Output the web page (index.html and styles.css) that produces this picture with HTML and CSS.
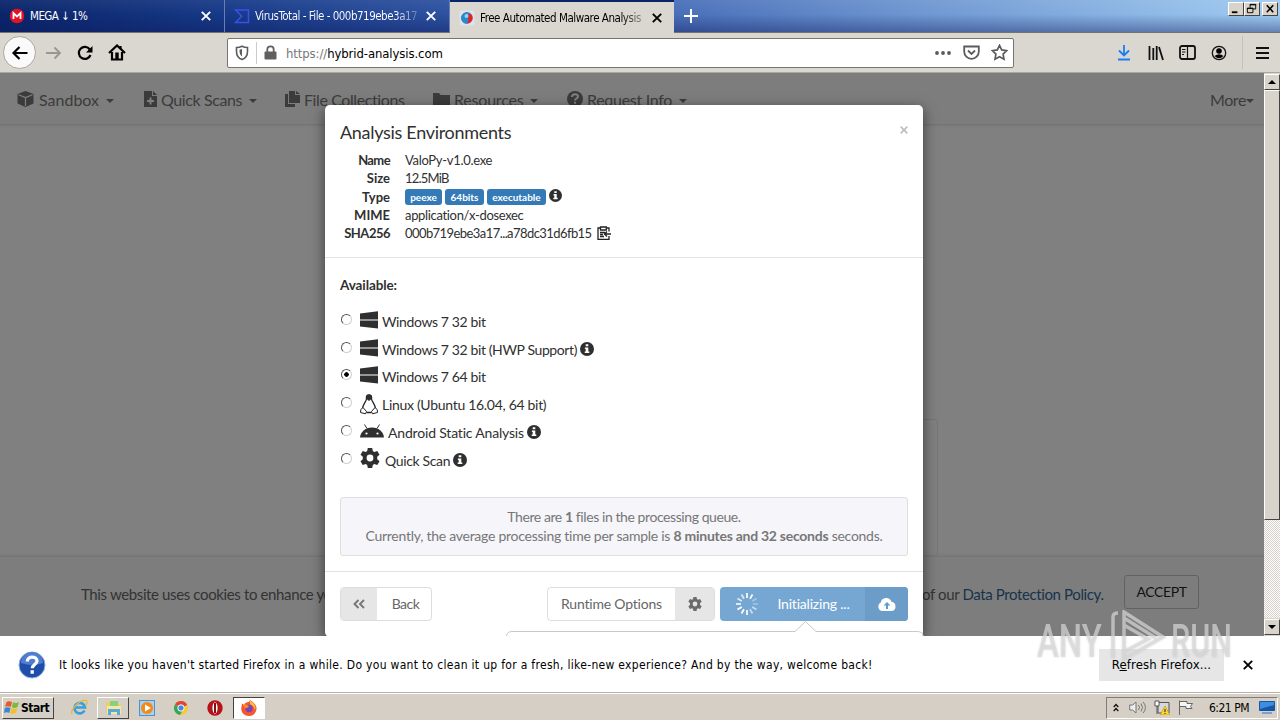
FILE: index.html
```html
<!DOCTYPE html>
<html lang="en">
<head>
<meta charset="utf-8">
<title>Free Automated Malware Analysis</title>
<link rel="stylesheet" href="styles.css">
</head>
<body>
<svg class="defs" width="0" height="0">
  <symbol id="win" viewBox="0 0 18 18"><path d="M0 2.6 18 .2V8.400H0zM0 9.400H18V17.600L0 15.400z"/></symbol>
  <symbol id="info" viewBox="0 0 14 14"><circle cx="7" cy="7" r="7"/><path fill="#fff" d="M5.7 2.3h2.6v2H5.7zM4.9 5.5h3.4v4h1v1.6H4.7V9.500h1V7h-.8z"/></symbol>
  <symbol id="gear" viewBox="0 0 20 20"><path fill-rule="evenodd" d="M7.800 0h4.400l.6 3 1.500.9 3-1 2.200 3.800-2.300 2v2.600l2.300 2-2.200 3.800-3-1-1.500.9-.6 3H7.800l-.6-3-1.500-.9-3 1L.5 13.300l2.300-2V8.700L.5 6.700l2.200-3.800 3 1L7.200 3zM10 6.600a3.400 3.400 0 1 0 0 6.800 3.400 3.400 0 0 0 0-6.800z"/></symbol>
  <symbol id="x" viewBox="0 0 10 10"><path d="M.8.8 9.200 9.200M9.200.8.8 9.200" stroke="currentColor" stroke-width="1.900" fill="none"/></symbol>
</svg>
<div class="screen">
  <header class="tabs">
    <div class="tab">
      <svg class="fav" viewBox="0 0 16 16"><circle cx="8" cy="8" r="7.300" fill="#e01424"/><path d="M4.500 11V5.200L8 8.500l3.500-3.300V11" fill="none" stroke="#fff" stroke-width="1.800"/></svg>
      <span class="tab-title t-mega">MEGA ↓ 1%</span><svg class="tab-x"><use href="#x"/></svg>
    </div>
    <div class="tab">
      <svg class="fav" viewBox="0 0 16 16"><path d="M1.500 2h13v12.500h-13l6.200-6.200z" fill="none" stroke="#3c50e8" stroke-width="1.500"/></svg>
      <span class="tab-title fade-light t-vt">VirusTotal - File - 000b719ebe3a17</span><svg class="tab-x"><use href="#x"/></svg>
    </div>
    <div class="tab active">
      <svg class="fav" viewBox="0 0 16 16"><rect x=".5" y=".5" width="15" height="15" rx="2" fill="#d8e4ee"/><circle cx="8" cy="8" r="5.800" fill="#dc2626"/><path d="M8 13.800A5.800 5.800 0 1 1 12 3.800C9 4 8 6 9 8s0 4-1 5.800z" fill="#238bd0"/><circle cx="7.500" cy="6" r="2" fill="#9bd2f2"/></svg>
      <span class="tab-title fade-dark t-ha">Free Automated Malware Analysis</span><svg class="tab-x"><use href="#x"/></svg>
    </div>
    <svg class="newtab" viewBox="0 0 14 14"><path d="M7 0v14M0 7h14" stroke="#fff" stroke-width="2"/></svg>
    <div class="winbtns">
      <svg viewBox="0 0 15 13"><path d="M3 9h6v2H3z"/></svg>
      <svg viewBox="0 0 15 13"><path d="M5.500 5V1.500h6v5H9M5 2h7M2.500 5.500h6v5h-6zM2 6h7" fill="none" stroke="#000"/></svg>
      <svg class="last" viewBox="0 0 15 13"><path d="M4 2.500l7 7.500M11 2.500 4 10" stroke="#000" stroke-width="1.700"/></svg>
    </div>
  </header>
  <div class="toolbar">
    <div class="back"><svg width="18" height="18" viewBox="0 0 18 18"><path d="M16.500 9H2.500M8.500 3 2.500 9l6 6" class="ln"/></svg></div>
    <svg class="fwd" width="17" height="16" viewBox="0 0 17 16"><path d="M1 8h14M9.500 2.500 15 8l-5.500 5.500" fill="none" stroke="#999791" stroke-width="1.800"/></svg>
    <svg class="reload" width="16" height="16" viewBox="0 0 16 16"><path d="M12.800 4.500A6 6 0 1 0 13.500 10" class="ln"/><path d="M15.500 1v6.500H9z"/></svg>
    <svg class="home" width="18" height="17" viewBox="0 0 18 17"><path d="M1 9 9 1.500 17 9" class="ln"/><path d="M4 8v7.500h10V8M12.500 5V2" class="ln"/><path d="M7.300 8.500h3.400v7H7.300z"/></svg>
    <div class="urlbar">
      <svg class="shield" width="14" height="16" viewBox="0 0 14 16"><path d="M1.500 2.500Q4.500 2.500 7 1.200q2.500 1.300 5.500 1.300v4c0 4-2 6.800-5.500 8-3.500-1.200-5.500-4-5.500-8z" fill="none" stroke="#5b5b5b" stroke-width="1.600"/><path d="M7 4v7.500C5 10.200 4.500 8.300 4.500 4.800z" fill="#5b5b5b"/></svg>
      <i class="usep"></i>
      <svg width="13" height="15" viewBox="0 0 13 15"><path d="M3.300 7V4.500a3.200 3.200 0 0 1 6.400 0V7" fill="none" stroke="#606060" stroke-width="1.800"/><rect x=".5" y="6.500" width="12" height="8" rx="1" fill="#606060"/></svg>
      <span class="url"><span class="proto">https://</span>hybrid-analysis.com</span>
      <svg width="16" height="16" viewBox="0 0 16 16" fill="#5b5b5b"><circle cx="2" cy="8" r="1.900"/><circle cx="8" cy="8" r="1.900"/><circle cx="14" cy="8" r="1.900"/></svg>
      <svg class="pocket" width="17" height="15" viewBox="0 0 17 15" fill="none" stroke="#5b5b5b" stroke-width="1.800"><path d="M1.200 1.500h14.600v5a7.300 7.300 0 0 1-14.600 0z"/><path d="M5 5.500 8.500 9 12 5.500"/></svg>
      <svg width="17" height="17" viewBox="0 0 17 17"><path d="m8.500 1.300 2.200 4.600 5 .7-3.600 3.500.9 5.100-4.500-2.400L4 15.200l.9-5.100L1.300 6.600l5-.7z" fill="none" stroke="#5b5b5b" stroke-width="1.700"/></svg>
    </div>
    <div class="tools">
      <svg width="16" height="17" viewBox="0 0 16 17" fill="none" stroke="#1a7df5" stroke-width="1.800"><path d="M8 1v10M3 6.500l5 5 5-5M2 15.500h12"/></svg>
      <svg width="16" height="16" viewBox="0 0 16 16" stroke="#111" stroke-width="1.800"><path d="M1.500 1v14M5.300 3v12M8.700 1v14M11 2l4 13"/></svg>
      <svg width="17" height="15" viewBox="0 0 17 15" fill="none" stroke="#111" stroke-width="1.800"><rect x="1" y="1" width="15" height="13" rx="2"/><path d="M8.500 1v13M3 4.500h3.500M3 7h3.500M3 9.500h2" stroke-width="1.200"/></svg>
      <svg width="16" height="16" viewBox="0 0 16 16"><circle cx="8" cy="8" r="6.700" fill="none" stroke="#111" stroke-width="1.300"/><circle cx="8" cy="6" r="2.800"/><path d="M3.500 11Q8 7.500 12.500 11 8 15.500 3.500 11z"/></svg>
      <i class="tsep"></i>
      <svg width="13" height="14" viewBox="0 0 13 14" stroke="#111" stroke-width="2"><path d="M0 2h13M0 7h13M0 12h13"/></svg>
    </div>
  </div>
  <div class="viewport">
    <main class="page">
      <nav class="nav">
        <span class="n1"><svg width="17" height="16" viewBox="0 0 17 16"><path d="m8.500 0 8 3v9.500l-8 3.500-8-3.500V3z"/><path d="m1.500 3.800 7 2.700 7-2.700M8.500 6.500V15" fill="none" stroke="#808080" stroke-width="1.200"/></svg><b class="nl1">Sandbox</b><i></i></span>
        <span class="n2"><svg width="13" height="16" viewBox="0 0 13 16"><path d="M0 0h8v5h5v11H0zM9 0l4 4H9z"/><path d="M6.500 6.500v7M3 10h7" stroke="#808080" stroke-width="2"/></svg><b class="nl2">Quick Scans</b><i></i></span>
        <span class="n3"><svg width="15" height="16" viewBox="0 0 15 16"><path d="M0 3h3v10h7v3H0zM4 0h6v4h5v8H4zM11 0l4 3h-4z"/></svg><b class="nl3">File Collections</b></span>
        <span class="n4"><svg width="17" height="14" viewBox="0 0 17 14"><path d="M0 1h6l1.500 2H17v11H0z"/></svg><b class="nl4">Resources</b><i></i></span>
        <span class="n5"><svg width="16" height="16" viewBox="0 0 16 16"><circle cx="8" cy="8" r="8"/><path d="M5 6c0-4 6-3.500 6-.5 0 2-3 1.700-3 4M8 10.800v2" fill="none" stroke="#808080" stroke-width="2"/></svg><b class="nl5">Request Info</b><i></i></span>
        <span class="n6"><b class="nl6">More</b><i></i></span>
      </nav>
      <div class="panel"></div>
      <div class="cookies"><span class="ck">This website uses cookies to enhance your</span><span class="policy"><span>of our</span> <a>Data Protection Policy.</a></span><span class="accept">ACCEPT</span></div>
      <section class="modal">
        <div class="mhead">
          <div class="mtitle"><h4>Analysis Environments</h4><svg width="8" height="8" class="close"><use href="#x"/></svg></div>
          <dl>
            <dt class="d1">Name</dt><dd><span class="v1">ValoPy-v1.0.exe</span></dd>
            <dt class="d2">Size</dt><dd><span class="v2">12.5MiB</span></dd>
            <dt class="d3">Type</dt><dd><em class="e1">peexe</em><em class="e2">64bits</em><em class="e3">executable</em><svg class="inf3" width="13" height="13"><use href="#info"/></svg></dd>
            <dt class="d4">MIME</dt><dd><span class="v4">application/x-dosexec</span></dd>
            <dt class="d5">SHA256</dt><dd><span class="v5">000b719ebe3a17...a78dc31d6fb15</span><svg class="clip" width="14" height="14" viewBox="0 0 14 14"><path d="M3 2H1v11.300h11V10M10 2h2v3.500M3.500 1h5.800v3H3.500zM3 6.500h5M3 8.500h3M3 10.500h4M14 8H7.500M10 5.500 7.500 8l2.500 2.500" fill="none" stroke="#222" stroke-width="1.300"/></svg></dd>
          </dl>
        </div>
        <div class="mbody">
          <strong>Available:</strong>
          <ul>
            <li><i class="radio"></i><svg class="w"><use href="#win"/></svg><span class="o1">Windows 7 32 bit</span></li>
            <li><i class="radio"></i><svg class="w"><use href="#win"/></svg><span class="o2">Windows 7 32 bit (HWP Support)</span><svg class="inf"><use href="#info"/></svg></li>
            <li><i class="radio on"></i><svg class="w"><use href="#win"/></svg><span class="o3">Windows 7 64 bit</span></li>
            <li><i class="radio"></i><svg class="tux" viewBox="0 0 18 21"><path d="M6.500 5C6 2 7 .8 9 .8S12 2 11.500 5c.5 3 4 5.500 4 10M6.500 5c-.5 3-4 5.500-4 10M6.500 18.500h5" fill="none" stroke="#222" stroke-width="1.300"/><path d="M6.500 1.500 9 .5l2.500 1V5L9 7 6.500 5z"/><path d="m3 13.500 3.500 4-1 2.300-5-1.300.3-3zM15 13.500l-3.500 4 1 2.300 5-1.300-.3-3z" fill="#fff" stroke="#222"/></svg><span class="o4">Linux (Ubuntu 16.04, 64 bit)</span></li>
            <li><i class="radio"></i><svg class="droid" viewBox="0 0 24 14"><path d="M0 13.500C.5 8 5 3.500 12 3.500S23.500 8 24 13.500z"/><path d="m4.500.5 2.500 4M19.500.5l-2.500 4" stroke="#2f2f2f"/><circle cx="6.500" cy="9.500" r="1.100" fill="#fff"/><circle cx="17.500" cy="9.500" r="1.100" fill="#fff"/></svg><span class="o5">Android Static Analysis</span><svg class="inf"><use href="#info"/></svg></li>
            <li><i class="radio"></i><svg class="cog"><use href="#gear"/></svg><span class="o6">Quick Scan</span><svg class="inf"><use href="#info"/></svg></li>
          </ul>
          <div class="queue"><p class="q1">There are <b>1</b> files in the processing queue.</p><p class="q2">Currently, the average processing time per sample is <b>8 minutes and 32 seconds</b> seconds.</p></div>
        </div>
        <div class="mfoot">
          <div class="btn backb"><i><svg width="12" height="10" viewBox="0 0 12 10"><path d="M5.500 1 1.500 5l4 4M11 1 7 5l4 4" fill="none" stroke="#777" stroke-width="1.900"/></svg></i><span>Back</span></div>
          <div class="btn runtime"><span>Runtime Options</span><i><svg width="14" height="14"><use href="#gear"/></svg></i></div>
          <div class="btn init"><svg class="spin" width="22" height="22" viewBox="-11 -11 22 22" stroke="#fff" stroke-width="1.700"><path d="M0-6v-5M3-5.200 5.500-9.500"/><path d="M5.200-3 9.500-5.500M6 0h5" opacity=".35"/><path d="m5.200 3 4.300 2.500M3 5.200l2.500 4.300" opacity=".6"/><path d="M0 6v5M-3 5.200l-2.500 4.300M-5.200 3l-4.300 2.500M-6 0h-5"/><path d="m-5.200-3-4.300-2.500M-3-5.200l-2.500-4.300" opacity=".75"/></svg><span>Initializing ...</span><i><svg width="18" height="13" viewBox="0 0 18 13" fill="#fff"><path d="M4.500 13a4.500 4.500 0 0 1-1.700-8.500 5.500 5.500 0 0 1 10.600-.7A4.700 4.700 0 0 1 14 13z"/><path d="M9 4 5.500 7.500H8V11h2V7.500h2.500z" fill="#609bce"/></svg></i></div>
        </div>
        <svg class="pop" width="418" height="15" viewBox="0 0 418 15"><path d="M.5 15Q1 10.500 6 10.500H289L299.500.5 310 10.500H411Q417 10.500 417 15" fill="#fff" stroke="#c9c9cc"/></svg>
      </section>
    </main>
    <aside class="scroll"><div class="sbtn"><svg width="8" height="4" viewBox="0 0 8 4"><path d="M4 0 8 4H0z"/></svg></div><div class="thumb"></div><div class="track"></div><div class="sbtn"><svg width="8" height="4" viewBox="0 0 8 4"><path d="M0 0h8L4 4z"/></svg></div></aside>
  </div>
  <div class="notice">
    <svg width="28" height="28" viewBox="0 0 28 28"><circle cx="14" cy="14" r="13" fill="#1f4daa" stroke="#91acd9"/><path d="M3 12a11 11 0 0 1 22 0q-10 4-22 0z" fill="#4e7ed0"/><path d="M9.300 10.500c0-6 9.700-5.500 9.700-.5 0 3.500-4.700 3.500-4.700 7.200M14.200 19.300v3.500" fill="none" stroke="#fff" stroke-width="3.300"/></svg>
    <span class="msg">It looks like you haven't started Firefox in a while. Do you want to clean it up for a fresh, like-new experience? And by the way, welcome back!</span>
    <div class="refresh"><span>R<u>e</u>fresh Firefox...</span></div>
    <svg class="nx" width="10" height="10"><use href="#x"/></svg>
  </div>
  <footer class="taskbar">
    <div class="start"><svg width="16" height="15" viewBox="0 0 16 15"><path d="M2.500 2Q5 .5 8 2L6.800 7Q4 5.500 1 7z" fill="#e85a29"/><path d="M9 2.300q3 1.500 6-.3L13.500 7q-3 1.700-5.700.3z" fill="#7bba3c"/><path d="M.8 8q3-1.500 5.700 0L5.300 13Q3 11.500 0 13z" fill="#3c84d4"/><path d="M7.500 8.300q3 1.500 5.700 0L12 13q-3 1.500-5.700.3z" fill="#f6bf26"/></svg><span>Start</span></div>
    <svg class="ie" width="17" height="17" viewBox="0 0 17 17"><path d="M13.500 11.500A5.300 5.300 0 1 1 14 8.500H4" fill="none" stroke="#39a0dc" stroke-width="2.700"/><path d="M1 15C-1 11 9 0 15 1.500c2 .7.500 4-.5 5" fill="none" stroke="#e4b83f" stroke-width="1.300"/></svg>
    <div class="task up"><svg width="17" height="16" viewBox="0 0 17 16"><path d="M1 2h6l1 2h8v10H1z" fill="#e8cf70"/><path d="M5 1h8v6H5z" fill="#8ccf77"/><path d="M2 6h14v8H2z" fill="#f6e6a0"/><path d="M3 9h12v6h-3v-3H6v3H3z" fill="#59aadc"/></svg></div>
    <svg class="wmp" width="16" height="16" viewBox="0 0 16 16"><rect x=".5" y=".5" width="15" height="15" fill="#a8d0ef" stroke="#4f91c8"/><circle cx="8" cy="8" r="6" fill="#f28a18"/><path d="m6 4.500 6 3.500-6 3.500z" fill="#fff"/></svg>
    <svg class="chrome" width="14" height="14" viewBox="0 0 14 14"><circle cx="7" cy="7" r="7" fill="#f8cb2f"/><path d="M7 7 1 3.400A7 7 0 0 1 13.200 4z" fill="#e24436"/><path d="M7 7 1 3.400A7 7 0 0 0 6 14l3.500-6z" fill="#39a557"/><circle cx="7" cy="7" r="3.200" fill="#4688e8" stroke="#fff"/></svg>
    <svg class="opera" width="16" height="16" viewBox="0 0 16 16"><circle cx="8" cy="8" r="7.700" fill="#b81219"/><ellipse cx="8" cy="8" rx="2.600" ry="5.800" fill="#fff"/><path d="M7 3h2v10H7z" fill="#811015"/></svg>
    <div class="task down"><svg width="16" height="16" viewBox="0 0 16 16"><path d="M1 3.500 3 5q1-3 5-3l1-2c2 1 6 4 6.500 8 .3 4-3 8-7.500 8S0 13 .3 8z" fill="#f5562c"/><path d="M9 .5c4 2 6.500 6 5 9.500q-1-4-5-6z" fill="#fdc13b"/><circle cx="8" cy="8.500" r="3.700" fill="#7646b8"/><path d="M2 5c3-1 5 0 6 2-2 0-2 2-4 1z" fill="#fa8c28"/></svg></div>
    <div class="tray">
      <svg class="chev" width="6" height="9" viewBox="0 0 6 9"><path d="m.7 4 2.300-2.500L5.300 4M.7 8 3 5.500 5.300 8" fill="none" stroke="#111" stroke-width="1.300"/></svg>
      <svg class="spk" width="17" height="13" viewBox="0 0 17 13"><path d="M.7 4h3L7 1v11L3.700 9h-3z" fill="#eee" stroke="#777"/><path d="M9.500 4q2 2.500 0 5M12 2.500q3 4 0 8M14.200 1q4.500 5.500 0 11" fill="none" stroke="#777"/></svg>
      <svg class="net" width="16" height="15" viewBox="0 0 16 15"><path d="M4 2.500h11V13H4z" fill="#d8d8d8" stroke="#555"/><path d="M1 1h4v5H1zM3 6v8" fill="#fff" stroke="#555"/><path d="m11 6 5 9H6z" fill="#ffd42b" stroke="#a78500" stroke-width=".5"/><path d="M11 9v3M11 13v1" stroke="#222"/></svg>
      <svg class="flag" width="16" height="15" viewBox="0 0 16 15"><path d="M1.500 15V.5M2 1.500h7v2h5.500l-2 3 1.500 2H8v-2H2" fill="#f5f5f5" stroke="#666"/></svg>
      <span class="clock">6:21 PM</span>
      <svg width="16" height="13" viewBox="0 0 16 13"><rect width="16" height="10" rx="1" fill="#1855a8"/><path d="M1 1h14v3L1 8z" fill="#3b8ee0"/><path d="M3 11h10v2H3z" fill="#7ba1c8"/></svg>
    </div>
  </footer>
  <div class="mark"><span>ANY</span><svg width="58" height="52" viewBox="0 0 58 52" fill="none" stroke="currentColor" stroke-width="3.500"><path d="M3 48V7q0-4 5-4M14 2v47l39-22zM14 8l32 20M14 15l24 14-24 13"/></svg><span class="run">RUN</span></div>
</div>
</body>
</html>
```
FILE: styles.css
```css
* { box-sizing: border-box; }
body { margin: 0; overflow: hidden; }
p, h4, ul, dl, dd, dt { margin: 0; padding: 0; }
i, em { font-style: normal; }
svg { flex: none; display: block; }
.defs { position: absolute; }
.screen { position: relative; width: 1280px; height: 720px; display: flex; flex-direction: column; font: 12px "DejaVu Sans Condensed", "DejaVu Sans", sans-serif; color: #000; white-space: nowrap; }
.ln { fill: none; stroke: #000; stroke-width: 2.2; }

.tabs { height: 33px; display: flex; background: linear-gradient(180deg, rgba(255,255,255,.06), transparent 45%, rgba(15,25,90,.4)), linear-gradient(90deg, #0a246a 0, #173a88 18%, #3a5fae 45%, #6b93cf 70%, #a0cbf1 100%); border-bottom: 1px solid #77736c; }
.tab { width: 225px; display: flex; align-items: center; padding: 0 13px 0 9px; border-right: 1px solid #6680b6; color: #fff; }
.tab.active { width: 224px; height: 33px; color: #000; background: #dad7d0; border-top: 2px solid #0a246a; border-right: 0; padding-right: 12px; }
.fav { width: 16px; height: 16px; margin-right: 5px; }
.tab-title { width: 166px; overflow: hidden; font-size: 11.5px; }
.t-mega { letter-spacing: -.55px; }
.t-vt { letter-spacing: -.5px; }
.t-ha { letter-spacing: -.46px; }
.tab-x { width: 10px; height: 10px; margin-left: 6px; }
.fade-light { background: linear-gradient(90deg, #fff 85%, rgba(255,255,255,.15)); background-clip: text; color: transparent; }
.fade-dark { background: linear-gradient(90deg, #000 85%, rgba(0,0,0,.2)); background-clip: text; color: transparent; }
.newtab { width: 14px; height: 14px; margin: 9px 0 0 10px; }
.winbtns { display: flex; margin: 2px 2px 0 auto; height: 14px; }
.winbtns svg { width: 16px; height: 14px; background: #d8d4cc; border: 1px solid; border-color: #fff #444 #444 #fff; }
.winbtns .last { margin-left: 2px; }

.toolbar { height: 40px; background: #dad7d0; border-bottom: 1px solid #aaa8a2; display: flex; align-items: center; }
.back { width: 33px; height: 33px; margin-left: 3px; border: 1px solid #aaa7a1; border-radius: 50%; background: #fafafa; display: flex; align-items: center; justify-content: center; }
.fwd { margin-left: 9px; }
.reload { margin-left: 15px; }
.home { margin-left: 15px; }
.urlbar { width: 787px; height: 30px; margin-left: 101px; background: #fff; border: 1px solid #77756f; border-radius: 2px; display: flex; align-items: center; padding: 0 5px 0 7px; }
.usep { width: 1px; height: 22px; background: #ccc; margin: 0 7px 0 7px; }
.url { flex: 1; margin-left: 9px; font-size: 13px; letter-spacing: -.1px; padding-top: 1px; }
.proto { color: #777; }
.pocket { margin: 0 11px 0 12px; }
.tools { flex: 1; display: flex; align-items: center; padding-left: 102px; gap: 16px; }
.tools svg:nth-child(3) { margin: 0 -1px; }
.tsep { width: 1px; height: 33px; background: #c5c1ba; margin: 0 -2px 0 -1px; }
.tools svg:last-child { margin-left: -1px; }

.viewport { height: 563px; display: flex; }
.page { position: relative; width: 1264px; background: #808080; overflow: hidden; display: flex; flex-direction: column; font-family: Lato, sans-serif; color: #333; }
.nav { height: 52px; background: #7d7d7d; border-bottom: 1px solid #747474; box-shadow: 0 1px 2px #777; display: flex; align-items: center; padding: 1px 10px 0 17px; font-size: 16px; color: #3b3b3b; }
.nav span { display: flex; align-items: center; fill: #3b3b3b; }
.nav b { font-weight: 400; margin-left: 4px; }
.nav i { border: 4px solid transparent; border-top-color: #3b3b3b; border-bottom: 0; margin: 3px 0 0 7px; }
.nav .nl1 { margin-left: 5px; }
.nl2, .nl3 { letter-spacing: -.4px; }
.nl4 { letter-spacing: -.2px; }
.nl5 { letter-spacing: -.3px; }
.nl6 { letter-spacing: -.4px; }
.n1 { width: 127px; } .n2 { width: 141px; } .n3 { width: 148px; } .n4 { width: 134px; } .nav .n6 { margin-left: auto; }
.nav .n6 b { margin: 0; } .nav .n6 i { margin-left: 0; }
.panel { width: 613px; height: 137px; margin: 294px 0 0 325px; border: 1px solid #757575; border-bottom: 0; border-radius: 4px; }
.cookies { height: 80px; border-top: 1px solid #757575; background: #7d7d7d; box-shadow: 0 -1px 2px #777; display: flex; align-items: center; padding-bottom: 6px; font-size: 15px; }
.ck { width: 842px; padding-left: 81px; letter-spacing: -.37px; }
.policy { width: 282px; padding-left: 80px; letter-spacing: -.38px; }
.policy a { color: #17334c; }
.accept { width: 75px; height: 34px; margin-top: -4px; border: 1px solid #626262; border-radius: 3px; display: flex; align-items: center; justify-content: center; color: #111; font-size: 14px; letter-spacing: -.4px; }

.modal { position: absolute; left: 325px; top: 32px; width: 598px; height: 532px; border-radius: 5px; background: #fff; box-shadow: 0 4px 14px rgba(0,0,0,.55); display: flex; flex-direction: column; font-size: 13px; color: #303030; fill: #2f2f2f; }
.mhead { height: 153px; padding: 15px; border-bottom: 1px solid #e2e2e2; }
.mtitle { height: 31px; display: flex; justify-content: space-between; align-items: flex-start; }
h4 { font-size: 18px; font-weight: 400; line-height: 25px; letter-spacing: -.3px; }
.close { margin: 6px 0 0 0; color: #bbb; }
dl { display: grid; grid-template-columns: 50px 1fr; grid-auto-rows: 18.3px; column-gap: 15px; align-items: center; }
dt { font-weight: 700; text-align: right; }
.d1 { letter-spacing: -.6px; }
.d5 { letter-spacing: -.5px; }
dd { display: flex; align-items: center; }
.v1 { letter-spacing: -.3px; }
.v2 { letter-spacing: -.8px; }
.v4 { letter-spacing: -.33px; }
.v5 { letter-spacing: -.57px; }
em { height: 16px; line-height: 17px; margin-right: 3px; background: #337ab7; color: #fff; border-radius: 3px; font-size: 10px; font-weight: 700; text-align: center; }
.e1 { width: 37px; } .e2 { width: 39px; } .e3 { width: 59px; }
.inf3 { margin-bottom: 2px; }
.clip { margin-left: 5px; }
.mbody { height: 314px; padding: 18px 15px 15px; border-bottom: 1px solid #e2e2e2; }
.mbody strong { display: block; height: 19px; line-height: 19px; font-size: 13.500px; letter-spacing: -.1px; }
ul { margin-top: 12px; height: 175px; list-style: none; font-size: 14px; }
li { height: 27.8px; display: flex; align-items: center; }
li span { padding-top: 1px; }
.o1, .o2, .o3 { letter-spacing: -.38px; }
.o4 { letter-spacing: -.3px; }
.o5 { letter-spacing: -.18px; }
.o6 { letter-spacing: -.35px; }
.radio { width: 11px; height: 11px; margin: 0 8px 3px 1px; border: 1px solid; border-color: #555 #d0d0d0 #d0d0d0 #555; border-radius: 50%; }
.radio.on { background: radial-gradient(#000 2px, transparent 2.5px); }
.w { width: 18px; height: 18px; margin: 0 4px 2px 0; }
.inf { width: 14px; height: 14px; margin: 0 0 0 3px; }
.tux { width: 18px; height: 21px; margin-right: 4px; }
.droid { width: 24px; height: 14px; margin: 0 4px 3px 0; }
.cog { width: 20px; height: 20px; margin: 0 5px 3px 0; }
.queue { height: 59px; margin-top: 15px; border: 1px solid #dedee3; border-radius: 3px; background: #f5f5fa; padding-top: 9px; text-align: center; line-height: 19px; color: #777; font-size: 14px; }
.q1 { letter-spacing: -.42px; }
.q2 { letter-spacing: -.26px; }
.mfoot { display: flex; padding: 15px; }
.btn { height: 34px; display: flex; align-items: center; border: 1px solid #ddd; border-radius: 4px; color: #666; font-size: 14px; overflow: hidden; }
.btn i { height: 34px; background: #e6e6e6; display: flex; align-items: center; justify-content: center; fill: #6b6b6b; }
.btn span { flex: 1; text-align: center; letter-spacing: -.2px; padding-bottom: 1px; }
.backb { width: 92px; margin-right: 115px; } .backb i { width: 36px; }
.backb span { padding-left: 3px; letter-spacing: -.5px; }
.runtime { width: 168px; margin-right: 5px; } .runtime i { width: 39px; }
.init { width: 188px; background: #76a7d3; border: 0; color: #fff; } .init i { width: 43px; background: #6c9dc8; }
.init span { padding-left: 4px; }
.spin { margin-left: 16px; }
.pop { position: absolute; left: 181px; top: 516px; }

.scroll { width: 16px; display: flex; flex-direction: column; background: #d8d4cc; }
.sbtn { height: 16px; display: flex; align-items: center; justify-content: center; border: 1px solid; border-color: #fff #444 #444 #fff; background: #d8d4cc; margin-top: 1px; }
.thumb { height: 430px; border: 1px solid; border-color: #fff #444 #444 #fff; }
.track { height: 98px; background: repeating-conic-gradient(#fff 0 25%, #d5d1c8 0 50%) 0 0 / 2px 2px; }

.notice { height: 56px; background: #fff; display: flex; align-items: center; padding: 1px 27px 0 18px; }
.msg { width: 1053px; padding: 1px 0 0 13px; letter-spacing: .31px; }
.refresh { width: 125px; height: 32px; background: #e6e6e6; display: flex; align-items: center; justify-content: center; font-size: 13px; letter-spacing: .1px; }
.nx { margin-left: auto; }
.taskbar { height: 28px; border-top: 1px solid #b5b0a8; background: #d5cfc6; box-shadow: inset 0 1px #fff; display: flex; align-items: center; padding: 3px 2px 1px; }
.start { width: 52px; height: 22px; border: 1px solid; border-color: #fff #444 #444 #fff; display: flex; align-items: center; gap: 1px; padding-left: 1px; font-weight: 700; font-size: 12px; letter-spacing: -.5px; }
.ie { margin-left: 17px; }
.task { width: 32px; height: 22px; border: 1px solid; display: flex; align-items: center; justify-content: center; }
.up { margin: 0 10px 0 9px; border-color: #fff #444 #444 #fff; }
.down { margin-left: 10px; border-color: #444 #fff #fff #444; background: #fff; }
.chrome { margin: 0 19px 0 19px; }
.tray { width: 172px; height: 22px; margin-left: auto; border: 1px solid; border-color: #817d76 #fff #fff #817d76; display: flex; align-items: center; padding: 0 2px 0 6px; }
.spk { margin-left: 10px; } .net { margin: 0 8px; }
.clock { flex: 1; padding-left: 5px; text-align: center; font-size: 12px; letter-spacing: -.5px; }
.mark { position: absolute; left: 1037px; top: 609px; width: 196px; height: 54px; display: flex; justify-content: space-between; align-items: center; color: rgba(218,218,218,.68); filter: drop-shadow(0 0 1px rgba(120,120,120,.4)); pointer-events: none; }
.mark span { font: 500 47px/52px "Roboto", sans-serif; width: 66px; transform: scaleX(.7); transform-origin: left; padding-top: 10px; }
.mark .run { width: 62px; transform: scaleX(.65); }
.mark svg { margin-left: 4px; }
```
